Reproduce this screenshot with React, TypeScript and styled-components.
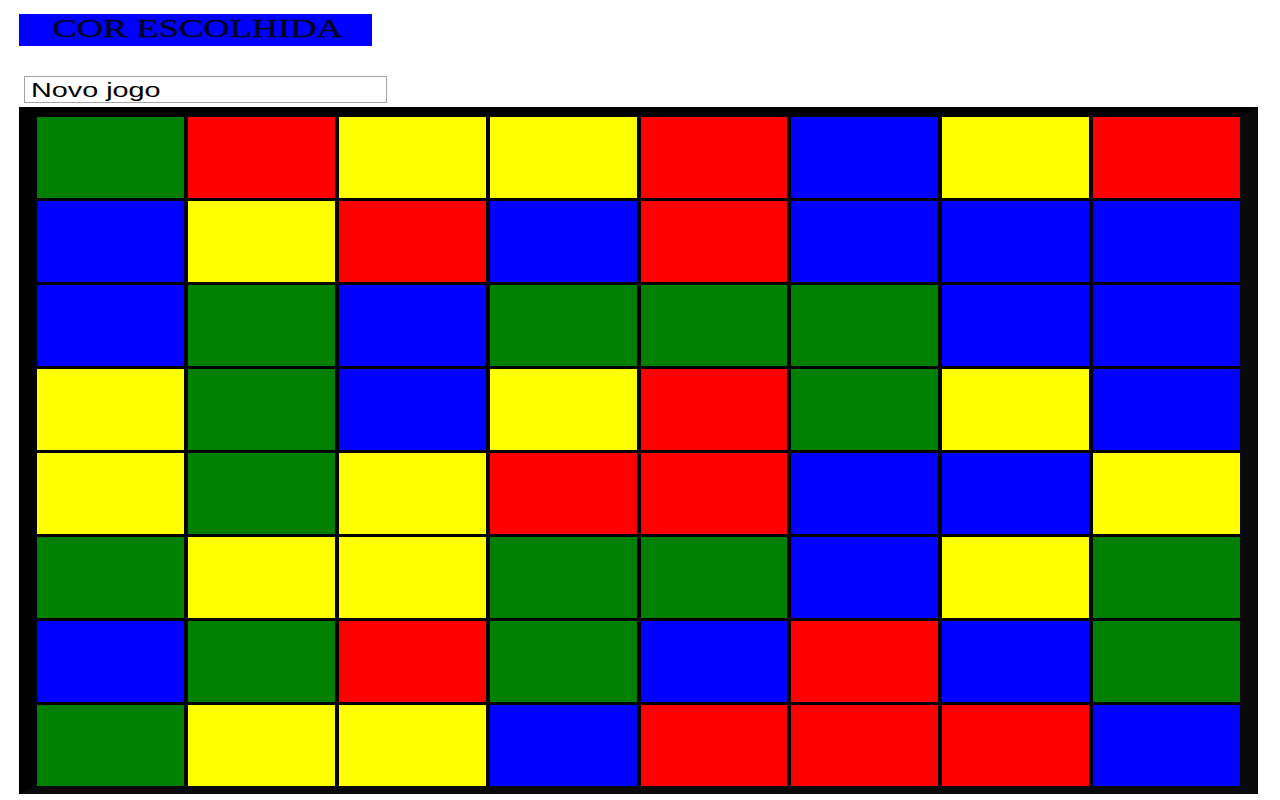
import React from "react";
import styled, { createGlobalStyle } from "styled-components";

const Global = createGlobalStyle`
  html, body { margin: 0; padding: 0; background: #ffffff; }
  body { font-family: "Liberation Serif", serif; }
`;

const Page = styled.div`
  padding: 14px 22px 0 19px;
  width: 1239px;
`;

const Chosen = styled.div<{ $color: string }>`
  width: 353px;
  height: 32px;
  background: ${(p) => p.$color};
  display: flex;
  align-items: center;
  justify-content: center;
  overflow: hidden;
`;

const ChosenText = styled.span`
  display: inline-block;
  font-family: "Liberation Serif", serif;
  font-size: 26px;
  line-height: 1;
  color: #000022;
  transform: scaleX(1.4);
  margin-top: -3px;
  margin-left: 4px;
  white-space: nowrap;
  -webkit-text-stroke: 0.4px #000022;
`;

const NewGame = styled.div`
  margin: 30px 0 0 5px;
  width: 355px;
  height: 25px;
  border: 1px solid #a3a3a3;
  display: flex;
  align-items: center;
  padding-left: 6px;
  box-sizing: content-box;
  cursor: pointer;
`;

const NewGameText = styled.span`
  display: inline-block;
  font-family: "Liberation Sans", Arial, sans-serif;
  font-size: 21px;
  line-height: 1;
  color: #000;
  transform: scaleX(1.37);
  transform-origin: left center;
  white-space: nowrap;
`;

const Board = styled.div`
  margin-top: 4px;
  background: #000;
  border-style: solid;
  border-color: #000 #0a0a0a #0a0a0a #000;
  border-width: 10px 18px 8px 18px;
  display: grid;
  grid-template-columns: repeat(8, 1fr);
  grid-auto-rows: 81px;
  column-gap: 4px;
  row-gap: 3px;
`;

const Cell = styled.div<{ $color: string }>`
  background: ${(p) => p.$color};
`;

const C: Record<string, string> = {
  G: "#008000",
  R: "#ff0000",
  Y: "#ffff00",
  B: "#0000ff",
};

const rows = [
  "GRYYRBYR",
  "BYRBRBBB",
  "BGBGGGBB",
  "YGBYRGYB",
  "YGYRRBBY",
  "GYYGGBYG",
  "BGRGBRBG",
  "GYYBRRRB",
];

export default function App() {
  return (
    <>
      <Global />
      <Page>
        <Chosen $color="#0000ff">
          <ChosenText>COR ESCOLHIDA</ChosenText>
        </Chosen>
        <NewGame>
          <NewGameText>Novo jogo</NewGameText>
        </NewGame>
        <Board>
          {rows.map((r, i) =>
            r.split("").map((ch, j) => <Cell key={`${i}-${j}`} $color={C[ch]} />)
          )}
        </Board>
      </Page>
    </>
  );
}
